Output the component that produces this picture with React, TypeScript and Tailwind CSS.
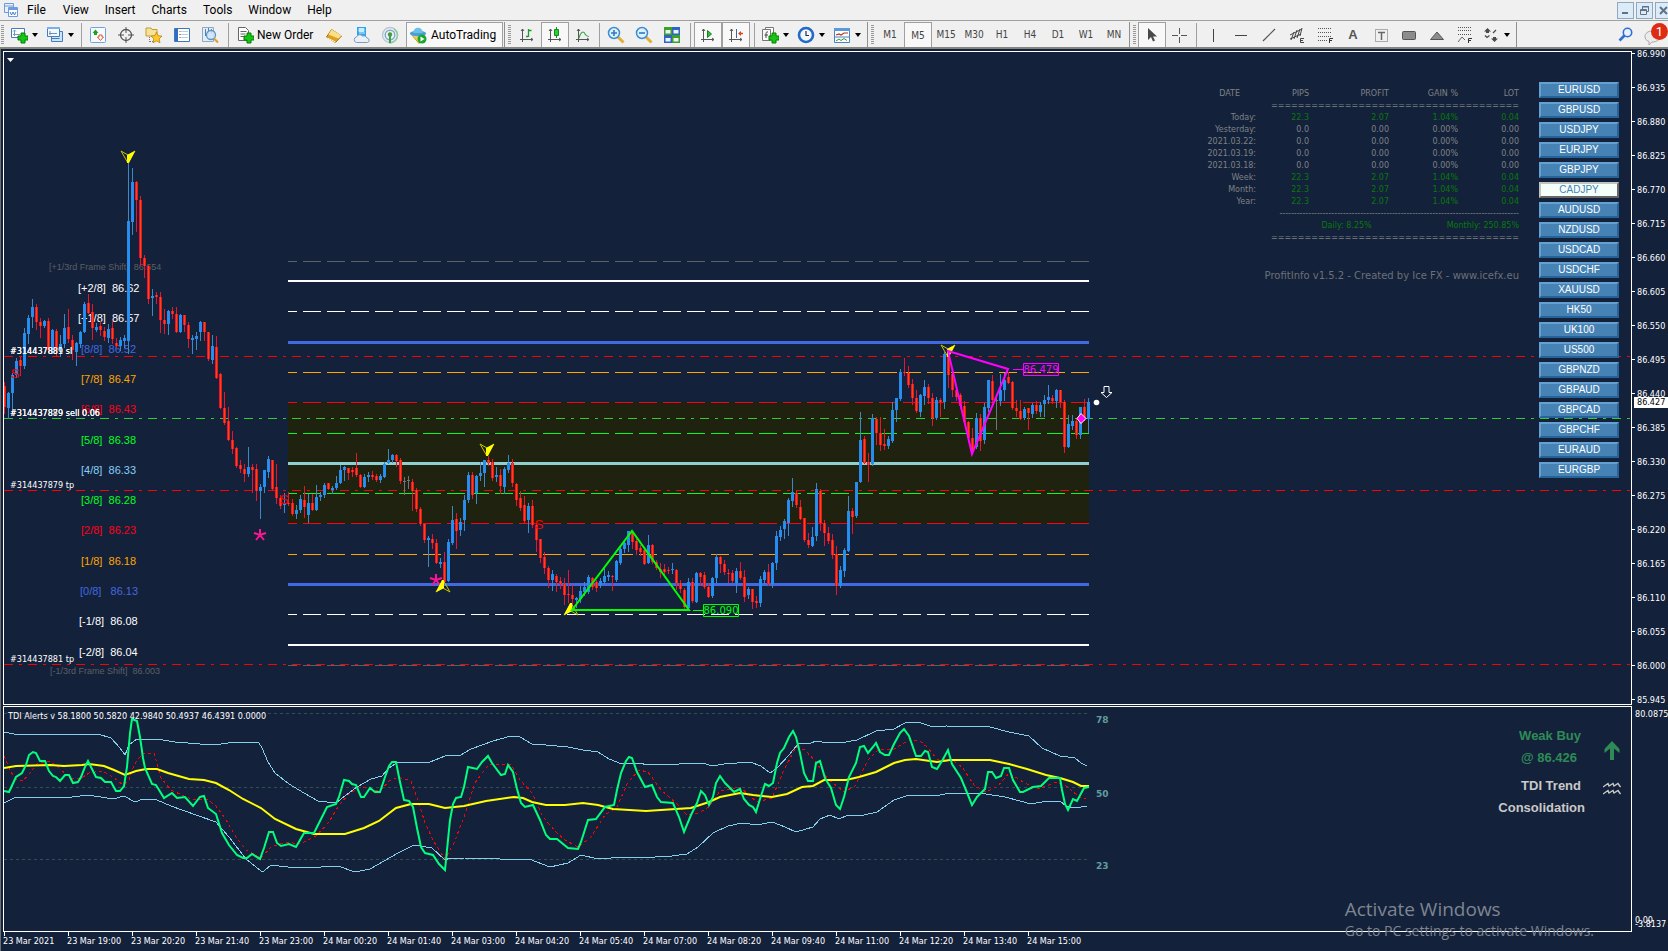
import { ReactNode } from "react";

// each bar is kind + high,bodyTop,bodyBottom,low (b = up, r = down, g = flat)
const BARS = `r382,386,407,413 b392,393,408,418 b373,375,393,412 b358,361,375,377 r357,360,366,375 b328,333,366,368 b315,318,334,343 b299,307,317,327 r304,307,322,329 r318,322,326,337
b320,321,326,327 r318,321,350,352 b329,330,350,353 r329,331,351,355 b335,344,350,356 b314,328,344,347 r309,327,339,342 r335,340,350,359 b342,343,352,365 b331,332,344,347
b302,304,332,332 r294,303,313,313 r304,312,328,339 b323,327,330,331 r321,326,330,335 r327,331,337,340 b324,329,338,342 r321,328,339,343 r338,343,346,347 b337,340,346,350
b335,338,341,347 b163,221,341,353 b168,182,222,234 r181,182,200,231 r196,200,258,265 r255,258,266,277 r265,266,299,303 b289,296,298,315 r292,295,297,303 r292,297,320,332
r309,320,324,333 b310,311,324,334 r307,311,314,318 r307,314,332,332 b314,315,332,332 r315,315,325,331 r322,325,339,347 b335,338,340,353 b332,336,339,349 b321,322,332,340
r322,322,332,340 r332,332,359,360 b335,346,360,363 r336,347,378,378 r373,374,408,408 r392,408,423,424 r407,421,440,440 r431,440,449,453 r447,448,466,467 r460,465,469,472
r464,469,474,481 b447,467,474,476 r464,467,470,492 r464,469,491,500 b484,487,491,518 b470,470,487,492 b456,459,472,477 r460,460,489,490 r464,487,498,503 r495,498,506,508
b493,503,505,512 r492,503,504,505 r499,503,514,515 b505,510,514,518 b495,499,510,512 r486,500,507,517 b494,503,515,522 r494,503,510,510 b485,497,510,510 b492,495,497,500
b483,485,495,497 r483,483,489,489 b486,488,490,493 b476,483,488,489 b465,470,483,483 b466,467,470,480 r468,468,473,479 r467,470,472,476 r453,468,475,476 r474,475,487,487
b474,477,487,487 b472,475,477,481 r471,475,477,479 r474,476,480,481 b474,476,480,482 b462,464,477,477 b449,460,463,463 b454,455,460,462 r454,455,461,466 r458,460,481,483
g477,481,482,494 g476,480,481,488 r479,482,491,510 r488,490,509,511 r507,509,524,525 r523,524,540,542 b536,538,540,566 r534,539,543,548 r539,543,563,563 b558,562,564,567
r552,562,582,582 b539,542,581,581 b506,520,543,544 r513,519,531,548 b518,522,530,535 b495,500,520,530 b472,475,500,502 r472,475,495,498 b475,476,493,503 b462,473,476,480
b460,460,473,486 r456,460,463,465 r459,462,478,480 b467,475,477,481 r469,475,486,493 b467,469,487,493 b455,463,470,472 r459,463,483,486 r483,484,500,505 r491,498,508,510
r496,505,521,522 b503,506,520,532 r500,506,525,527 r523,525,540,551 r539,539,558,562 r552,557,568,573 r566,568,580,587 b570,574,580,590 r574,576,582,591 r577,581,584,588
r578,584,595,604 r570,594,595,602 r585,595,599,608 b597,598,600,607 b586,591,599,602 b582,587,592,595 b575,577,592,593 r577,578,587,589 r580,582,588,591 b578,581,585,587
b568,576,582,583 b571,575,577,580 r575,576,577,590 b560,561,580,581 b547,549,563,564 b541,543,549,552 b531,531,545,551 r531,532,542,548 r537,541,550,554 r545,548,552,555
r547,550,564,564 b535,545,563,563 r544,545,562,563 r560,562,568,569 r563,569,572,577 r564,569,572,574 r567,570,571,573 b563,569,570,573 r569,570,583,589 r580,583,589,592
r588,590,607,608 b578,582,608,609 r578,582,601,602 b572,573,602,602 r572,573,577,585 r572,575,587,588 r583,587,597,597 b577,578,596,597 b554,557,578,582 r556,557,564,572
r560,564,572,574 r569,573,574,582 r570,573,581,582 b568,571,583,592 r562,571,578,579 r570,577,597,601 b587,589,595,598 r589,589,602,608 r596,601,603,607 b576,579,603,606
b570,572,580,583 r564,572,584,585 b562,563,584,587 b531,536,563,569 b526,530,537,540 b519,521,529,538 b498,500,523,535 b478,492,501,506 r491,493,505,507 r500,507,519,519
r518,518,540,541 r533,540,545,547 b527,537,546,546 b483,489,536,540 r489,491,523,530 r520,523,533,545 r527,533,541,543 r534,540,555,558 r546,554,586,594 b566,570,586,587
b548,550,571,576 b496,511,551,551 r508,511,517,533 b482,482,516,517 b412,440,482,482 r436,439,463,463 r453,462,465,481 b414,418,464,465 r417,419,433,444 r417,433,445,450
r429,444,446,449 b436,439,446,448 b402,410,441,442 b398,398,410,421 b369,372,399,400 r358,372,373,375 r366,373,385,387 r379,384,398,404 r390,398,411,412 b394,395,412,416
b380,387,396,404 r384,387,398,403 r393,398,418,425 b397,400,418,419 r398,400,402,416 b352,354,402,408 r350,355,375,387 r370,374,390,396 r385,390,397,400 r393,395,406,408
r401,406,422,423 r421,422,438,440 r428,438,450,454 b413,418,447,448 r414,418,441,450 b403,407,440,443 b380,380,408,411 r375,381,400,402 g397,400,401,429 b374,390,401,405
b373,380,390,400 r372,377,383,383 r381,382,408,409 r400,408,411,416 r400,411,419,419 b407,409,418,419 r408,408,413,429 b403,405,414,417 r401,405,411,413 b402,405,412,416
b395,400,404,416 b385,397,400,403 r395,398,401,403 b389,390,401,407 r390,390,402,407 r400,402,447,452 b415,424,447,447 b415,421,426,429 r418,421,435,438 b407,407,435,438
r399,407,419,420 b398,402,419,432`
    .split(/\s+/)
    .map((s) => ({ kind: s[0], v: s.slice(1).split(",").map(Number) }));

const RSI =
    "4,791 9,792 16,777 22,773 26,765 29,755 33,752 36,753 40,761 45,761 49,771 53,776 56,777 60,781 65,775 69,775 73,783 78,782 81,777 85,767 88,761 91,767 96,777 101,778 105,782 111,782 116,791 120,791 124,786 127,767 130,733 132,719 137,721 140,737 143,758 145,768 152,784 156,785 164,798 172,793 177,798 185,797 193,806 200,797 204,796 208,808 216,814 222,833 229,845 237,855 243,858 247,858 252,854 260,859 264,848 269,832 273,832 277,843 281,846 289,844 296,847 304,833 314,833 320,821 327,807 336,804 339,797 344,780 349,781 352,784 356,785 361,797 364,797 370,788 375,792 380,792 385,777 389,766 392,762 396,762 400,782 404,800 409,801 413,807 417,828 421,847 425,853 433,855 439,864 445,870 447,850 450,820 453,804 456,798 461,797 464,787 468,767 477,769 482,762 488,756 492,763 501,775 505,774 508,765 513,772 517,789 521,803 525,807 533,805 540,820 546,835 550,839 557,839 568,848 578,849 581,842 588,820 596,819 605,807 614,805 617,790 621,773 626,761 629,757 632,758 637,772 645,787 652,785 657,797 661,802 673,803 679,817 684,832 691,815 697,803 701,791 705,795 709,805 713,797 716,783 720,776 725,783 734,792 740,789 744,799 749,805 753,807 756,812 760,799 765,784 769,786 773,783 777,763 780,753 784,748 789,737 793,731 796,737 800,753 804,773 808,781 813,781 816,763 820,761 825,778 831,788 836,805 840,809 844,797 849,777 856,763 860,747 864,746 868,753 873,747 876,743 880,752 885,755 889,755 894,744 900,733 904,729 909,736 916,756 921,756 925,751 928,752 932,767 937,769 942,761 948,750 952,764 961,778 968,795 972,805 977,797 985,789 988,772 992,772 996,778 1001,776 1004,768 1009,768 1013,780 1020,792 1023,792 1033,787 1041,786 1049,778 1060,778 1062,790 1065,804 1068,810 1073,799 1077,801 1084,788 1089,787";
const BASELINE =
    "4,768 16,766 50,765 64,766 82,765 89,764 104,766 114,770 125,775 136,771 146,769 157,769 168,773 189,779 204,780 216,783 229,790 243,799 261,808 275,819 296,829 314,834 345,834 364,828 379,821 396,808 411,804 429,804 445,808 464,806 486,801 514,797 523,798 532,802 546,805 565,805 583,803 598,805 613,809 646,811 676,809 691,808 709,802 720,797 740,793 753,795 772,797 787,794 802,787 813,786 824,780 846,780 859,777 876,772 894,763 905,760 916,759 937,762 950,760 990,760 1009,764 1027,769 1046,775 1060,778 1073,782 1081,786 1089,786";
const UPPER =
    "4,732 14,734 32,734 54,734 64,734 98,734 111,738 120,748 125,755 129,745 137,739 157,739 175,742 200,744 221,744 236,742 259,743 262,748 268,762 275,773 289,784 304,793 318,801 336,803 346,795 357,787 371,779 382,776 389,768 398,762 418,763 430,762 445,756 461,755 471,749 493,741 511,736 520,737 532,744 546,745 568,747 583,750 598,752 609,759 622,764 639,763 648,765 679,764 702,763 713,766 724,764 750,762 761,766 770,773 777,768 789,755 798,744 811,743 816,741 822,742 846,742 857,740 876,731 894,729 905,723 918,722 933,727 946,726 990,727 1009,732 1029,736 1042,748 1060,756 1075,758 1081,763 1087,766";
const LOWER =
    "4,803 16,797 36,797 64,798 88,795 113,799 124,796 135,802 143,799 157,800 171,806 196,815 216,822 229,837 246,859 261,871 264,871 271,865 296,868 321,867 338,866 355,872 370,869 384,861 398,853 414,845 432,848 445,860 450,858 464,858 500,859 529,859 550,867 568,863 581,855 598,859 624,857 639,858 672,856 687,854 698,847 713,833 728,826 742,823 757,825 772,822 785,827 796,832 813,827 820,819 830,815 839,819 848,815 864,815 877,812 894,800 909,795 935,796 950,793 964,794 979,793 1005,797 1031,804 1042,802 1060,801 1066,806 1075,808 1087,806";
const SIGNAL =
    "4,756 11,772 16,779 23,781 30,773 38,763 50,761 59,768 70,778 80,779 89,773 102,771 113,777 123,785 129,780 134,765 143,753 154,753 157,763 161,778 171,790 186,797 196,800 207,799 216,806 225,818 236,837 246,850 261,858 271,847 286,842 300,844 316,836 329,822 339,805 350,793 361,787 380,791 389,781 398,777 411,781 418,800 425,823 434,842 445,859 454,843 464,817 475,783 489,764 511,765 520,780 532,793 543,817 557,833 565,840 578,847 591,837 605,815 617,807 628,782 639,770 648,772 661,790 676,803 687,815 698,813 709,807 720,791 740,787 757,802 772,798 783,772 796,747 805,750 816,762 827,778 844,792 855,786 868,760 879,749 894,749 909,740 920,741 927,747 937,759 951,759 962,767 974,785 986,792 998,786 1009,773 1023,782 1038,789 1057,782 1068,787 1079,797 1086,799";

const LEVELS: { y: number; w: number; color: string; text?: string; dash?: boolean; label: string; x: number; small?: boolean }[] = [
    { y: 261, w: 1, color: "#5c5f66", dash: true, label: "[+1/3rd Frame Shift]  86.654", x: 49, small: true },
    { y: 280, w: 2, color: "#ffffff", label: "[+2/8]  86.62", x: 78 },
    { y: 311, w: 1, color: "#ffffff", dash: true, label: "[+1/8]  86.57", x: 78 },
    { y: 341, w: 3, color: "#4169e1", label: "[8/8]  86.52", x: 81 },
    { y: 372, w: 1, color: "#ffa500", dash: true, label: "[7/8]  86.47", x: 81 },
    { y: 402, w: 1, color: "#ff0019", dash: true, label: "[6/8]  86.43", x: 81 },
    { y: 433, w: 1, color: "#00ff21", dash: true, label: "[5/8]  86.38", x: 81 },
    { y: 462, w: 3, color: "#8fcfd0", text: "#87cefa", label: "[4/8]  86.33", x: 81 },
    { y: 493, w: 1, color: "#00ff21", dash: true, label: "[3/8]  86.28", x: 81 },
    { y: 523, w: 1, color: "#ff0019", dash: true, label: "[2/8]  86.23", x: 81 },
    { y: 554, w: 1, color: "#ffa500", dash: true, label: "[1/8]  86.18", x: 81 },
    { y: 583, w: 3, color: "#4169e1", label: "[0/8]   86.13", x: 80 },
    { y: 614, w: 1, color: "#ffffff", dash: true, label: "[-1/8]  86.08", x: 79 },
    { y: 644, w: 2, color: "#ffffff", label: "[-2/8]  86.04", x: 79 },
    { y: 665, w: 1, color: "#5c5f66", dash: true, label: "[-1/3rd Frame Shift]  86.003", x: 50, small: true },
];

const PRICES = ["86.990", "86.935", "86.880", "86.825", "86.770", "86.715", "86.660", "86.605", "86.550", "86.495", "86.440", "86.385", "86.330", "86.275", "86.220", "86.165", "86.110", "86.055", "86.000", "85.945"];

const TIMES = ["23 Mar 2021", "23 Mar 19:00", "23 Mar 20:20", "23 Mar 21:40", "23 Mar 23:00", "24 Mar 00:20", "24 Mar 01:40", "24 Mar 03:00", "24 Mar 04:20", "24 Mar 05:40", "24 Mar 07:00", "24 Mar 08:20", "24 Mar 09:40", "24 Mar 11:00", "24 Mar 12:20", "24 Mar 13:40", "24 Mar 15:00"];

const SYMBOLS = ["EURUSD", "GBPUSD", "USDJPY", "EURJPY", "GBPJPY", "CADJPY", "AUDUSD", "NZDUSD", "USDCAD", "USDCHF", "XAUUSD", "HK50", "UK100", "US500", "GBPNZD", "GBPAUD", "GBPCAD", "GBPCHF", "EURAUD", "EURGBP"];

const PROFITS = [
    ["Today:", "22.3", "2.07", "1.04%", "0.04"],
    ["Yesterday:", "0.0", "0.00", "0.00%", "0.00"],
    ["2021.03.22:", "0.0", "0.00", "0.00%", "0.00"],
    ["2021.03.19:", "0.0", "0.00", "0.00%", "0.00"],
    ["2021.03.18:", "0.0", "0.00", "0.00%", "0.00"],
    ["Week:", "22.3", "2.07", "1.04%", "0.04"],
    ["Month:", "22.3", "2.07", "1.04%", "0.04"],
    ["Year:", "22.3", "2.07", "1.04%", "0.04"],
];

const axisText = "font-['DejaVu_Sans_Condensed','Open_Sans',sans-serif] text-[9px] leading-[10px] text-white";

function Icon({ children }: { children: ReactNode }) {
    return (
        <svg width={18} height={18} viewBox="0 0 18 18" fill="none" className="shrink-0">
            {children}
        </svg>
    );
}

const plus = <path d="M11 7h4v3h3v4h-3v3h-4v-3H8v-4h3z" fill="#12c812" stroke="#087a08" strokeWidth="1" />;
const axes = <path d="M4.500 3v13M2 13.500h13M3 5l1.500-2L6 5M13 12l2 1.500-2 1.500" stroke="#555" />;

function Tool({ label, pressed, children }: { label: string; pressed?: boolean; children: ReactNode }) {
    return (
        <button
            aria-label={label}
            className={`w-7 h-[26px] shrink-0 flex justify-center items-center ${pressed ? "border-x border-t border-x-[#a0a0a0] border-t-[#a0a0a0] bg-[#f8f8f8]" : ""}`}
        >
            {children}
        </button>
    );
}

function DropTool({ label, children }: { label: string; children: ReactNode }) {
    return (
        <button aria-label={label} className="w-9 h-[26px] shrink-0 flex items-center gap-1 pl-[3px]">
            {children}
            <svg width={6} height={4} viewBox="0 0 6 4" className="shrink-0">
                <path d="M0 0h6L3 4z" fill="#000" />
            </svg>
        </button>
    );
}

function Sep({ wide }: { wide?: boolean }) {
    return (
        <div className={`${wide ? "w-2" : "w-[5px]"} h-[24px] shrink-0 flex justify-center`}>
            <div className="w-px bg-[#a0a0a0]" />
        </div>
    );
}

function Grip() {
    return (
        <div className="w-[10px] h-[26px] shrink-0 flex items-center gap-[3px]">
            <div className="w-px h-full ml-px bg-[#909090]" />
            <div className="w-[3px] h-5 bg-[repeating-linear-gradient(#9a9a9a_0_1px,#efefef_1px_2px)]" />
        </div>
    );
}

function MenuBar() {
    return (
        <nav className="h-5 flex items-center bg-[#f0f0f0] font-['Roboto','Open_Sans',sans-serif] text-[12px] text-black">
            <svg width={16} height={16} viewBox="0 0 16 16" fill="none" className="ml-[3px] mr-px shrink-0">
                <path d="M1.500 1.500h9v9h-9zM1.500 4h9" stroke="#6b9be0" />
                <path d="M5.500 5.500h9v9h-9z" fill="#fff" stroke="#6b9be0" />
                <path d="M5 6h10v2H5z" fill="#6b9be0" />
                <path d="M7 10l1.500 3 1.500-3 1.500 3L13 10" stroke="#4a7cc8" />
            </svg>
            {["File", "View", "Insert", "Charts", "Tools", "Window", "Help"].map((m) => (
                <button key={m} className="px-2 first-of-type:pl-[7px] first-of-type:pr-[9px]">
                    {m}
                </button>
            ))}
            <div className="ml-auto -mr-1 flex gap-[2px] shrink-0">
                <button aria-label="Minimize" className="w-[17px] h-[17px] border border-[#8fa8c0] bg-[#dcebf8] flex justify-center items-center">
                    <svg width={11} height={11} viewBox="0 0 11 11">
                        <path d="M2 7h6v2H2z" fill="#5f7388" />
                    </svg>
                </button>
                <button aria-label="Restore" className="w-[17px] h-[17px] border border-[#8fa8c0] bg-[#dcebf8] flex justify-center items-center">
                    <svg width={11} height={11} viewBox="0 0 11 11" fill="none" stroke="#5f7388">
                        <path d="M3.500 4V1.500h6v5H7.500M3 2h7" />
                        <path d="M1.500 4.500h6v5h-6zM1 5.500h7" />
                    </svg>
                </button>
                <button aria-label="Close" className="w-[17px] h-[17px] border border-[#8fa8c0] bg-[#dcebf8] flex justify-center items-center">
                    <svg width={11} height={11} viewBox="0 0 11 11" stroke="#5f7388" strokeWidth="2">
                        <path d="M2 2l7 7M9 2L2 9" />
                    </svg>
                </button>
            </div>
        </nav>
    );
}

function Toolbar() {
    return (
        <div className="h-[29px] pt-px flex items-center border-t border-t-[#a0a0a0] border-b-2 border-b-[#85857f] bg-[#f0f0f0] font-['Roboto','Open_Sans',sans-serif] text-[12px] text-black overflow-hidden">
            <div className="w-[3px] h-5 ml-px mr-[3px] shrink-0 bg-[repeating-linear-gradient(#9a9a9a_0_1px,#efefef_1px_2px)]" />
            <DropTool label="New chart">
                <Icon>
                    <path d="M1.500 2.500h13v9h-13z" fill="#fff" stroke="#3f7fc0" />
                    <path d="M4.500 4v6M3 8.500h7M3 5.500l1.500-1.500 1.500 1.500" stroke="#7799bb" />
                    {plus}
                </Icon>
            </DropTool>
            <DropTool label="Profiles">
                <Icon>
                    <path d="M5.500 5.500h11v10h-11z" fill="#cfe2f6" stroke="#3f7fc0" />
                    <path d="M1.500 1.500h12v9h-12z" fill="#f4f9ff" stroke="#3f7fc0" />
                    <path d="M1 1h13v2H1z" fill="#7db0ea" />
                    <path d="M4 5v4M3 7.500h8" stroke="#6a8fb5" />
                    <path d="M5.500 12.500h8" stroke="#3f7fc0" />
                </Icon>
            </DropTool>
            <Sep />
            <Tool label="Market Watch">
                <Icon>
                    <rect x="1.500" y="1.500" width="15" height="15" rx="1" fill="#f7fbff" stroke="#6fa3dc" />
                    <path d="M6.500 3.500L9.500 7H8v2H5V7H3.500z" fill="#19a719" />
                    <path d="M11.500 14.500L8.500 11H10V9h3v2h1.500z" fill="#fff" stroke="#e5532a" />
                </Icon>
            </Tool>
            <Tool label="Data Window">
                <Icon>
                    <circle cx="9" cy="9" r="5.500" stroke="#555" strokeWidth="1.300" />
                    <path d="M9 1v6M9 11v6M1 9h6M11 9h6" stroke="#555" />
                </Icon>
            </Tool>
            <Tool label="Navigator">
                <Icon>
                    <path d="M1 2h5l1 1.500h5V10H1z" fill="#f6e39a" stroke="#c79a2a" />
                    <path d="M4.500 11v6M5 15.500h4" stroke="#777" strokeDasharray="1 1" />
                    <path d="M11.500 6l1.700 3.700 3.800.4-2.800 2.700.8 4-3.500-2-3.500 2 .8-4L6 10.100l3.800-.4z" fill="#ffc928" stroke="#b98412" strokeWidth=".8" />
                </Icon>
            </Tool>
            <Tool label="Terminal">
                <Icon>
                    <path d="M1.500 2.500h15v13h-15z" fill="#fff" stroke="#3d78bd" />
                    <path d="M2 3h3v12H2z" fill="#2d6fc0" />
                    <path d="M8 5.500h7M8 8.500h7M8 11.500h7" stroke="#b4cdea" />
                    <path d="M6.500 5.500h1M6.500 11.500h1" stroke="#e03020" />
                    <path d="M6.500 8.500h1" stroke="#222" />
                </Icon>
            </Tool>
            <Tool label="Strategy Tester">
                <Icon>
                    <path d="M1.500 1.500h11v14h-11z" fill="#e4edf6" stroke="#8fa9c4" />
                    <path d="M4.500 3v7M7.500 2v6M10.500 3v5" stroke="#5580aa" />
                    <circle cx="10" cy="9" r="4.500" fill="#cfe6fa" fillOpacity=".85" stroke="#5f93c6" strokeWidth="1.300" />
                    <path d="M13 12.500l4 4" stroke="#d9a32a" strokeWidth="2.200" />
                </Icon>
            </Tool>
            <Sep wide />
            <button className="w-[86px] h-[26px] shrink-0 flex items-center gap-[3px] pl-1 whitespace-nowrap">
                <Icon>
                    <path d="M2.500 1.500h7l3 3v10h-10z" fill="#fff" stroke="#666" />
                    <path d="M4.500 5.500h6M4.500 8h5M4.500 10.500h4" stroke="#666" />
                    {plus}
                </Icon>
                New Order
            </button>
            <div className="flex pl-[2px]">
                <Tool label="MetaEditor">
                    <Icon>
                        <path d="M1.500 11L6.500 3.500 16.500 10l-6 6.500z" fill="#e0a020" stroke="#a87510" />
                        <path d="M6.500 3.500l10 6-3 3L3.500 8.500z" fill="#fbe08a" />
                        <path d="M2.500 12l8 4" stroke="#fff3c4" />
                    </Icon>
                </Tool>
                <Tool label="MQL5 community">
                    <Icon>
                        <path d="M4 1h9v10H4z" fill="#2ea3ee" />
                        <path d="M6 2.500h5v3H6zM6 7h6" fill="#c9ebff" stroke="#c9ebff" />
                        <path d="M3.500 16.500a2.800 2.800 0 010-5.500 3.500 3.500 0 016-1 3.500 3.500 0 014.500 2 2.300 2.300 0 01.5 4.500z" fill="#e9f0f8" stroke="#7f9cc0" />
                    </Icon>
                </Tool>
                <Tool label="Signals">
                    <Icon>
                        <circle cx="9" cy="9" r="7.500" stroke="#b8c8d8" strokeWidth="1.400" />
                        <circle cx="9" cy="9" r="4.800" stroke="#7fa8d0" strokeWidth="1.400" />
                        <path d="M9 9v8a8 8 0 007.500-7.500A7.500 7.500 0 0013 3" stroke="#8fcf98" strokeWidth="1.500" />
                        <circle cx="9" cy="8.500" r="2.200" fill="#3c9e46" />
                        <path d="M9 9v8" stroke="#3c9e46" strokeWidth="2" />
                    </Icon>
                </Tool>
            </div>
            <button className="w-[97px] h-[26px] ml-[2px] shrink-0 flex items-center gap-1 pl-[2px] border border-[#a0a0a0] border-b-white bg-[#f8f8f8] whitespace-nowrap">
                <Icon>
                    <path d="M2 8l8 9.500L16 8z" fill="#f3cf55" stroke="#c39a25" />
                    <ellipse cx="9" cy="7.500" rx="8.200" ry="2.800" fill="#4aa0d8" />
                    <path d="M4.500 7C4 0 14 0 13.500 7z" fill="#6cc0ea" />
                    <circle cx="13" cy="13" r="4.500" fill="#19a82c" />
                    <path d="M11.500 10.500v5l4-2.500z" fill="#fff" />
                </Icon>
                AutoTrading
            </button>
            <Grip />
            <Tool label="Bar chart">
                <Icon>
                    {axes}
                    <path d="M10.500 3v8M8 10.500h2M11 4.500h2.500" stroke="#1d9a2b" strokeWidth="1.300" />
                </Icon>
            </Tool>
            <Tool label="Candlesticks" pressed>
                <Icon>
                    {axes}
                    <path d="M10.500 1v11" stroke="#148a20" />
                    <path d="M8.500 3.500h4v6h-4z" fill="#25d030" stroke="#148a20" />
                </Icon>
            </Tool>
            <Tool label="Line chart">
                <Icon>
                    {axes}
                    <path d="M5 12c2-7 5-7 6-4 .8 1.500 2 2.500 4 2.500" stroke="#3aa84a" strokeWidth="1.200" />
                </Icon>
            </Tool>
            <Sep />
            {["Zoom In", "Zoom Out"].map((z) => (
                <Tool key={z} label={z}>
                    <Icon>
                        <path d="M11 11l5.500 5.500" stroke="#e0b036" strokeWidth="3" />
                        <circle cx="7" cy="7" r="5.500" fill="#dff0fd" stroke="#3b8cd2" strokeWidth="1.500" />
                        <path d={z === "Zoom In" ? "M4 7h6M7 4v6" : "M4 7h6"} stroke="#2d79c0" strokeWidth="1.600" />
                    </Icon>
                </Tool>
            ))}
            <Tool label="Tile Windows">
                <Icon>
                    <path d="M1 1h8v8H1zM9 9h8v8H9z" fill="#3fa024" />
                    <path d="M9 1h8v8H9zM1 9h8v8H1z" fill="#2f63c4" />
                    <path d="M2.500 4h5v3.500h-5zM10.500 4h5v3.500h-5zM2.500 12h5v3.500h-5zM10.500 12h5v3.500h-5z" fill="#e9f4ff" />
                </Icon>
            </Tool>
            <Sep wide />
            <Tool label="Auto Scroll" pressed>
                <Icon>
                    {axes}
                    <path d="M8.500 4.500l4 3.500-4 3.500z" fill="#2fbf3a" stroke="#16801f" />
                </Icon>
            </Tool>
            <Tool label="Chart Shift" pressed>
                <Icon>
                    {axes}
                    <path d="M9.500 3v9" stroke="#3a66a8" />
                    <path d="M11 7.500l3-2.500v1.800h2v1.500h-2V10z" fill="#d9441e" />
                </Icon>
            </Tool>
            <Sep wide />
            <DropTool label="Indicators">
                <Icon>
                    <path d="M4.500 1.500h8v12h-8z" fill="#fff" stroke="#777" />
                    <path d="M1.500 3.500h8v11h-8z" fill="#fafafa" stroke="#777" />
                    <path d="M7 6c-2-.5-2 1-2 2v4M3.500 9H7" stroke="#444" />
                    {plus}
                </Icon>
            </DropTool>
            <DropTool label="Periods">
                <Icon>
                    <circle cx="9" cy="9" r="7" fill="#f1f8ff" stroke="#2369c8" strokeWidth="2.600" />
                    <path d="M9 5v4.500h3" stroke="#333" strokeWidth="1.200" />
                </Icon>
            </DropTool>
            <DropTool label="Templates">
                <Icon>
                    <path d="M1.500 2.500h15v14h-15z" fill="#fff" stroke="#4a82c2" />
                    <path d="M1 2h16v3H1z" fill="#5b98dc" />
                    <path d="M3 9l3-1 2 1 3-2h4" stroke="#b03a20" strokeWidth="1.200" />
                    <path d="M2 11h14" stroke="#4a82c2" />
                    <path d="M3 15l3-2 2 1.500 3-2 3 2" stroke="#2e9a3c" />
                </Icon>
            </DropTool>
            <Grip />
            <div className="flex font-['DejaVu_Sans_Condensed','Open_Sans',sans-serif] text-[10px] text-[#444]">
                {["M1", "M5", "M15", "M30", "H1", "H4", "D1", "W1", "MN"].map((p) => (
                    <Tool key={p} label={p} pressed={p === "M5"}>
                        {p}
                    </Tool>
                ))}
            </div>
            <Grip />
            <Tool label="Cursor" pressed>
                <Icon>
                    <path d="M5 2v12l3-3 2 4.500 2-1-2-4h4z" fill="#4a4a4a" />
                </Icon>
            </Tool>
            <Tool label="Crosshair">
                <Icon>
                    <path d="M8.500 2v6M8.500 11v6M1 9.500h6M10 9.500h6" stroke="#555" />
                </Icon>
            </Tool>
            <Sep />
            <Tool label="Vertical Line">
                <Icon>
                    <path d="M9.500 3v13" stroke="#444" />
                </Icon>
            </Tool>
            <Tool label="Horizontal Line">
                <Icon>
                    <path d="M3 9.500h12" stroke="#444" />
                </Icon>
            </Tool>
            <Tool label="Trendline">
                <Icon>
                    <path d="M3 15L15 3" stroke="#555" strokeWidth="1.200" />
                </Icon>
            </Tool>
            <Tool label="Equidistant Channel">
                <Icon>
                    <path d="M2 9L14 3M2 13L13 8M3 14l3-8M6 13l3-9M9 12l3-9M12 10l2-8" stroke="#444" />
                    <path d="M16 12.500h-3.500v4H16M12.500 14.500H15" stroke="#444" />
                </Icon>
            </Tool>
            <Tool label="Fibonacci">
                <Icon>
                    <path d="M2 2.500h13M2 6.500h13M2 10.500h13M2 14.500h9" stroke="#555" strokeDasharray="1 1" />
                    <path d="M17 12.500h-3.500V17M13.500 14.500H16" stroke="#333" />
                </Icon>
            </Tool>
            <Tool label="Text">
                <span className="font-['Liberation_Sans',sans-serif] font-bold text-[13px] text-[#555]">A</span>
            </Tool>
            <Tool label="Text Label">
                <Icon>
                    <path d="M3.500 3.500h12v12h-12z" stroke="#666" strokeDasharray="1 1" />
                    <path d="M6 6.500h7M9.500 6v8" stroke="#666" strokeWidth="1.500" />
                </Icon>
            </Tool>
            <Tool label="Rectangle">
                <Icon>
                    <rect x="2.500" y="5.500" width="13" height="8" rx="1" fill="#8c8c8c" stroke="#555" />
                </Icon>
            </Tool>
            <Tool label="Triangle">
                <Icon>
                    <path d="M2.500 13.500L9 6l6.500 7.500z" fill="#8c8c8c" stroke="#555" />
                </Icon>
            </Tool>
            <Tool label="Fibonacci Expansion">
                <Icon>
                    <path d="M2 1.500h14M2 4.500h14M2 8.500h14" stroke="#555" strokeDasharray="1 1" />
                    <path d="M2 16l4-5 3 3" stroke="#666" />
                    <path d="M16 12.500h-3.500V17M12.500 14.500H15" stroke="#333" />
                </Icon>
            </Tool>
            <DropTool label="Arrows">
                <Icon>
                    <path d="M5.500 2L9 5.500H7V7H4V5.500H2zM12.500 16L9 12.500h2V11h3v1.500h2z" fill="#4a4a4a" />
                    <path d="M3 9.500l2 2 2.500-2M11 7l3-3" stroke="#4a4a4a" strokeWidth="1.300" />
                </Icon>
            </DropTool>
            <div className="w-px h-[26px] ml-px bg-[#909090]" />
            <button aria-label="Search" className="ml-auto mr-2 shrink-0">
                <Icon>
                    <circle cx="11.500" cy="6.500" r="4.200" fill="#e8f2ff" stroke="#2e6fd6" strokeWidth="1.600" />
                    <path d="M8.500 9.500L3.500 14.500" stroke="#2e6fd6" strokeWidth="2.600" />
                </Icon>
            </button>
            <button aria-label="Notifications" className="relative w-[26px] h-6 shrink-0">
                <svg width={26} height={24} viewBox="0 0 26 24">
                    <path d="M10 8c5 0 8 2.500 8 5.500S15 19 10 19l-3 3v-3.500c-3-.8-4-3-4-5C3 10.500 6 8 10 8z" fill="#ececec" stroke="#a8a8a8" />
                </svg>
                <span className="absolute right-0 top-0 w-[17px] h-[17px] rounded-full bg-[#dd2c14] text-white text-[13px] leading-[17px] text-center">1</span>
            </button>
        </div>
    );
}

function ArrowMark({ x, y, up }: { x: number; y: number; up?: boolean }) {
    return (
        <g transform={`translate(${x} ${y}) rotate(${up ? 180 : 0})`}>
            <path d="M-7 -12L0 0L7 -12L0 -8Z" stroke="#c8c800" fill="none" />
            <path d="M-1 0L1 0L7 -12L-1 -8Z" fill="#ffff00" />
        </g>
    );
}

function Bars() {
    return (
        <g shapeRendering="crispEdges">
            {BARS.map(({ kind, v }, i) => {
                const x = 4 + i * 4;
                const edge = kind === "b" ? "#3f88c8" : kind === "r" ? "#e8152f" : "#70757d";
                const body = kind === "b" ? "#1e90ff" : kind === "r" ? "#ff4500" : "#70757d";
                const h = Math.max(v[2] - v[1], 1);
                return (
                    <g key={i}>
                        <rect x={x} y={v[0]} width={1} height={v[3] - v[0] + 1} fill={edge} />
                        <rect x={x - 1} y={v[1]} width={3} height={h} fill={kind === "b" ? "#2b8ae4" : edge} />
                        <rect x={x} y={v[1]} width={1} height={h} fill={body} />
                    </g>
                );
            })}
        </g>
    );
}

function PriceChart() {
    return (
        <svg className="block w-full h-[652px] font-['Liberation_Sans',sans-serif]" fill="none">
            <g transform="translate(-4 -52)">
                <path d="M7 58h7l-3.500 4z" fill="#fff" />
                <rect x={288} y={402} width={801} height={122} fill="#1f220e" />
                {LEVELS.map((l) => (
                    <text key={l.label} x={l.x} y={l.small ? (l.y < 400 ? 270 : 674) : l.y + (l.w === 1 ? 11 : 12)} fill={l.text ?? l.color} fontSize={l.small ? 9 : 11} className="whitespace-pre">
                        {l.label}
                    </text>
                ))}
                <g shapeRendering="crispEdges">
                    {LEVELS.map((l) => (
                        <path key={l.y} d={`M288 ${l.y + l.w / 2}H1089`} stroke={l.color} strokeWidth={l.w} strokeDasharray={l.dash ? "18 6" : undefined} strokeDashoffset={9} />
                    ))}
                    {[356, 418, 490, 664].map((y) => (
                        <line key={y} x1={4} x2="101%" y1={y + 0.5} y2={y + 0.5} stroke={y === 418 ? "#32cd32" : "#ff0000"} strokeDasharray="9 6 3 6" />
                    ))}
                </g>
                <Bars />
                <g fill="#fff" fontSize={9} className="font-['DejaVu_Sans_Condensed','Open_Sans',sans-serif]">
                    <text x={10} y={354}>#314437881 sl</text>
                    <text x={10} y={354}>#314437889 sl</text>
                    <text x={10} y={416}>#314437889 sell 0.06</text>
                    <text x={10} y={416}>#314437879 sell 0.06</text>
                    <text x={10} y={488}>#314437879 tp</text>
                    <text x={10} y={662}>#314437881 tp</text>
                </g>
                <g fill="#ff0000" fontSize={13} textAnchor="middle">
                    <text x={15} y={378}>S</text>
                    <text x={284} y={504}>S</text>
                    <text x={539} y={529}>S</text>
                </g>
                <g stroke="#ff1493" strokeWidth={2}>
                    <path d="M260 535v-6M260 535l-6-2M260 535l6-2M260 535l-4 5M260 535l4 5" />
                    <path d="M436 580v-6M436 580l-6-2M436 580l6-2M436 580l-4 5M436 580l4 5" />
                </g>
                <ArrowMark x={128} y={163} />
                <ArrowMark x={487} y={456} />
                <ArrowMark x={948} y={357} />
                <ArrowMark x={443} y={580} up />
                <ArrowMark x={571} y={603} up />

                <path d="M572 610L632 531L689 610Z" stroke="#00ff00" strokeWidth={2} />
                <path d="M693 610.500h10M703.500 604.500h35v12h-35z" stroke="#00ff00" />
                <path d="M948 351L1008 369L972 454Z" stroke="#ff00ff" strokeWidth={2} />
                <path d="M1013 369.500h10M1023.500 363.500h35v12h-35z" stroke="#ff00ff" />
                <g fontSize={10} textAnchor="middle" className="font-['DejaVu_Sans',sans-serif]">
                    <text x={721} y={614} fill="#00ff00">86.090</text>
                    <text x={1041} y={373} fill="#ff00ff">86.479</text>
                </g>

                <circle cx={1096.500} cy={402.500} r={2.800} fill="#fff" />
                <path d="M1104 386.500h5v6h3l-5.500 5-5.500-5h3z" stroke="#fff" />
                <path d="M1081 413.500l5 5-5 5-4-5z" fill="#ff00ff" stroke="#fff" />
            </g>
        </svg>
    );
}

function TdiChart() {
    return (
        <svg className="block w-full h-[224px]" fill="none">
            <g transform="translate(-4 -707)">
                {[
                    [713, 78],
                    [787, 50],
                    [859, 23],
                ].map(([y, v]) => (
                    <g key={v}>
                        <path d={`M4 ${y + 0.5}H1088`} stroke="#2f4f4f" strokeDasharray="3 3" />
                        <text x={1096} y={y + 10} fill="#5f9ea0" fontSize={9} className="font-['DejaVu_Sans',sans-serif] font-bold">
                            {v}
                        </text>
                    </g>
                ))}
                <g shapeRendering="crispEdges">
                    <polyline points={UPPER} stroke="#87ceeb" />
                    <polyline points={LOWER} stroke="#87ceeb" />
                    <polyline points={SIGNAL} stroke="#ff0000" strokeDasharray="3 3" />
                </g>
                <polyline points={BASELINE} stroke="#ffff00" strokeWidth={2} />
                <polyline points={RSI} stroke="#00ff7f" strokeWidth={2} />
                <text x={8} y={719} fill="#fff" fontSize={9} className="font-['DejaVu_Sans_Condensed','Open_Sans',sans-serif]">
                    TDI Alerts v 58.1800 50.5820 42.9840 50.4937 46.4391 0.0000
                </text>
            </g>
        </svg>
    );
}

function ProfitInfo() {
    return (
        <div className="flex flex-col items-end font-['DejaVu_Sans',sans-serif] text-[8px] leading-3 text-[#7e8187]">
            <table className="text-right">
                <thead>
                    <tr>
                        <th className="w-[60px] p-0 pr-4 font-normal">DATE</th>
                        <th className="w-[53px] p-0 font-normal">PIPS</th>
                        <th className="w-20 p-0 font-normal">PROFIT</th>
                        <th className="w-[69px] p-0 font-normal">GAIN %</th>
                        <th className="w-[61px] p-0 font-normal">LOT</th>
                    </tr>
                </thead>
                <tbody>
                    <tr>
                        <td colSpan={5} className="p-0">
                            {"=".repeat(37)}
                        </td>
                    </tr>
                    {PROFITS.map(([name, ...cells]) => (
                        <tr key={name}>
                            <td className="p-0">{name}</td>
                            {cells.map((c, i) => (
                                <td key={i} className={`p-0 ${cells[0] === "22.3" ? "text-[#067a0c]" : ""}`}>
                                    {c}
                                </td>
                            ))}
                        </tr>
                    ))}
                </tbody>
            </table>
            <p>{"-".repeat(83)}</p>
            <p className="flex gap-[75px] text-[#067a0c]">
                <span>Daily: 8.25%</span>
                <span>Monthly: 250.85%</span>
            </p>
            <p>{"=".repeat(37)}</p>
            <p className="mt-[26px] text-[10px] text-[#6c7078]">ProfitInfo v1.5.2 - Created by Ice FX - www.icefx.eu</p>
        </div>
    );
}

function SymbolList() {
    return (
        <div className="flex flex-col gap-1">
            {SYMBOLS.map((s) => (
                <button
                    key={s}
                    className={`w-20 h-4 border-2 flex justify-center items-center font-['Liberation_Sans',sans-serif] text-[10px] leading-3 ${
                        s === "CADJPY" ? "bg-[#f5fffa] text-[#4682b4] border-t-[#c0c4c4] border-l-[#c0c4c4] border-r-[#666] border-b-[#666]" : "bg-[#4682b4] text-white border-t-[#64a0d2] border-l-[#64a0d2] border-r-[#24649a] border-b-[#24649a]"
                    }`}
                >
                    {s}
                </button>
            ))}
        </div>
    );
}

function TrendStatus() {
    return (
        <div className="absolute right-[10px] top-[18px] flex gap-[22px] font-['Liberation_Sans',sans-serif] font-bold text-[13px] leading-[22px]">
            <div className="flex flex-col items-end">
                <p className="text-[#2e8b57]">Weak Buy</p>
                <p className="pr-1 text-[#2e8b57]">@ 86.426</p>
                <p className="mt-[6px] text-[#c9c9c9]">TDI Trend</p>
                <p className="-mr-1 text-[#c9c9c9]">Consolidation</p>
            </div>
            <div className="flex flex-col items-center gap-[22px] pt-4">
                <svg width={16} height={19} viewBox="0 0 16 19">
                    <path d="M8 0l7.500 8v4L10 7.500V19H6V7.500L.5 12V8z" fill="#2e8b57" />
                </svg>
                <svg width={18} height={14} viewBox="0 0 18 14" fill="none" stroke="#c9c9c9" strokeWidth={1.400}>
                    <path d="M0 5l5-3.500 1 2.500 4-2.500 1 2.500 4-2.500L17.500 5M0 12l5-3.500 1 2.500 4-2.500 1 2.500 4-2.500 2.500 3.500" />
                </svg>
            </div>
        </div>
    );
}

function PriceAxis() {
    return (
        <div className={`relative w-9 h-[657px] shrink-0 overflow-hidden ${axisText}`}>
            {PRICES.map((p) => (
                <div key={p} className="h-[34px] flex items-start">
                    <span className="w-[3px] h-px mt-1 mr-[2px] bg-white" />
                    {p}
                </div>
            ))}
            <div className="absolute right-0 top-[348px] w-[34px] h-[11px] pl-[3px] bg-white text-black">86.427</div>
        </div>
    );
}

export default function App() {
    return (
        <div className="w-full min-h-screen flex flex-col bg-[#14213a] overflow-hidden">
            <MenuBar />
            <Toolbar />
            <main className="relative flex-1 border-l border-l-[#6a6f76] pl-[2px]">
                <div className="flex">
                    <section className="relative flex-1 min-w-0 mt-[2px] h-[654px] border border-white overflow-hidden">
                        <PriceChart />
                        <div className="absolute right-3 top-[30px] flex items-start gap-5">
                            <div className="pt-[6px]">
                                <ProfitInfo />
                            </div>
                            <SymbolList />
                        </div>
                    </section>
                    <PriceAxis />
                </div>
                <div className="flex">
                    <section className="relative flex-1 min-w-0 h-[226px] border border-white overflow-hidden">
                        <TdiChart />
                        <TrendStatus />
                    </section>
                    <div className={`relative w-9 shrink-0 pt-[3px] pl-[3px] ${axisText}`}>
                        80.0875
                        <span className="absolute left-[3px] top-[209px]">0.00</span>
                        <span className="absolute left-[3px] top-[213px]">-3.8137</span>
                    </div>
                </div>
                <div className={`h-[19px] flex overflow-hidden ${axisText}`}>
                    {TIMES.map((t) => (
                        <div key={t} className="w-16 shrink-0 whitespace-nowrap">
                            <div className="w-px h-1 ml-px bg-white" />
                            {t}
                        </div>
                    ))}
                </div>
                <div className="absolute right-[74px] bottom-[10px] font-['Open_Sans','Noto_Sans',sans-serif] text-[#7d8591]">
                    <p className="text-[19px] leading-6">Activate Windows</p>
                    <p className="text-[14px] leading-5">Go to PC settings to activate Windows.</p>
                </div>
            </main>
        </div>
    );
}
